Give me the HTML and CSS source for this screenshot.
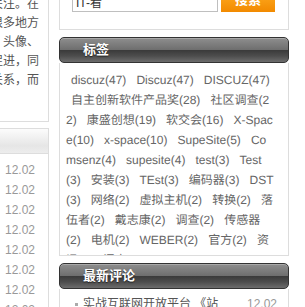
FILE: index.html
```html
<!DOCTYPE html>
<html lang="zh-CN">
<head>
    <meta charset="UTF-8">
    <meta name="viewport" content="width=device-width, initial-scale=1.0">
    <title>社区门户 - 标签</title>
    <link rel="stylesheet" href="styles.css">
</head>
<body>

<div class="wrap">

    <!-- main column (mostly scrolled out of view) -->
    <div class="main">
        <div class="box intro">
            <p>本站是一个以内容为核心的社区，我们更加重视会员之间的关注。在这个新平台上，您可以在很多地方看到其他会员的个人资料、头像、签名等信息，彼此交流并促进，同时也能够建立紧密的好友关系，而不只是浏览。</p>
        </div>

        <div class="box news">
            <div class="box-head">最新资讯</div>
            <ul class="news-list">
                <li><a href="#">康盛创想发布SupeSite 6.0正式版</a><span class="date">12.02</span></li>
                <li><a href="#">Discuz! 7.0 社区调查结果公布</a><span class="date">12.02</span></li>
                <li><a href="#">自主创新软件产品奖揭晓</a><span class="date">12.02</span></li>
                <li><a href="#">软交会现场直击</a><span class="date">12.02</span></li>
                <li><a href="#">X-Space 个人空间升级说明</a><span class="date">12.02</span></li>
                <li><a href="#">戴志康谈互联网开放平台</a><span class="date">12.02</span></li>
                <li><a href="#">虚拟主机安装教程</a><span class="date">12.02</span></li>
                <li><a href="#">编码器转换常见问题</a><span class="date">12.02</span></li>
            </ul>
        </div>
    </div>

    <!-- sidebar -->
    <div class="side">
        <div class="box search">
            <form class="search-form">
                <input type="text" class="search-input" value="IT-看">
                <button type="button" class="search-btn">搜索</button>
            </form>
        </div>

        <div class="side-head">标签</div>
        <div class="side-body tags">
            <a href="#">discuz(47)</a> <a href="#">Discuz(47)</a> <a href="#">DISCUZ(47)</a> <a href="#">自主创新软件产品奖(28)</a> <a href="#">社区调查(22)</a> <a href="#">康盛创想(19)</a> <a href="#">软交会(16)</a> <a href="#">X-Space(10)</a> <a href="#">x-space(10)</a> <a href="#">SupeSite(5)</a> <a href="#">Comsenz(4)</a> <a href="#">supesite(4)</a> <a href="#">test(3)</a> <a href="#">Test(3)</a> <a href="#">安装(3)</a> <a href="#">TEst(3)</a> <a href="#">编码器(3)</a> <a href="#">DST(3)</a> <a href="#">网络(2)</a> <a href="#">虚拟主机(2)</a> <a href="#">转换(2)</a> <a href="#">落伍者(2)</a> <a href="#">戴志康(2)</a> <a href="#">调查(2)</a> <a href="#">传感器(2)</a> <a href="#">电机(2)</a> <a href="#">WEBER(2)</a> <a href="#">官方(2)</a> <a href="#">资讯(2)</a> <a href="#">门户(2)</a>
        </div>

        <div class="side-head">最新评论</div>
        <div class="side-body comments">
            <ul>
                <li><a href="#">实战互联网开放平台 《站长》专访</a><span class="date">12.02</span></li>
            </ul>
        </div>
    </div>

</div>

</body>
</html>
```

FILE: styles.css
```css
html {
    overflow: hidden;
}
body {
    margin: 0;
    padding: 0;
    font-family: "Liberation Sans", "Noto Sans CJK SC", sans-serif;
    font-size: 12px;
    color: #555;
    background: #fff;
}
a {
    color: #666;
    text-decoration: none;
}
ul {
    list-style: none;
    margin: 0;
    padding: 0;
}
.wrap {
    display: flex;
    align-items: flex-start;
    gap: 10px;
    margin: -30px 0 0 -153px;
}
.main {
    width: 202px;
}
.side {
    width: 230px;
}
.box {
    border: 1px solid #ddd;
}

/* main column */
.intro {
    padding: 5px 9px 12px 11px;
}
.intro p {
    margin: 0;
    line-height: 19px;
}
.news {
    margin-top: 6px;
}
.box-head {
    height: 24px;
    line-height: 24px;
    padding-left: 12px;
    border-bottom: 1px solid #ddd;
    background: linear-gradient(#fcfcfc, #e6e6e6 70%, #ededed);
    font-weight: bold;
    color: #444;
}
.news-list {
    padding: 6px 13px 10px 12px;
}
.news-list li {
    display: flex;
    line-height: 20px;
}
.news-list a {
    flex: 1;
    overflow: hidden;
    white-space: nowrap;
}
.date {
    color: #999;
    margin-left: 12px;
}

/* sidebar */
.search {
    padding: 13px 0 17px 12px;
}
.search-form {
    display: flex;
    align-items: flex-end;
    gap: 3px;
    margin: 0;
}
.search-input {
    width: 146px;
    height: 22px;
    box-sizing: border-box;
    border: 1px solid #bfbfbf;
    padding: 0 3px;
    font-family: inherit;
    font-size: 12px;
    color: #333;
}
.search-btn {
    width: 54px;
    height: 28px;
    border: none;
    background: linear-gradient(#ffb63f, #f99c12 60%, #f28a00);
    color: #fff;
    font-family: inherit;
    font-size: 13px;
    font-weight: bold;
    cursor: pointer;
}
.side-head {
    height: 24px;
    line-height: 24px;
    margin-top: 7px;
    padding-left: 23px;
    border: 1px solid #333;
    border-radius: 5px;
    background: linear-gradient(#8e8e8e, #6f6f6f 48%, #3b3b3b 52%, #4d4d4d 75%, #6c6c6c);
    box-shadow: inset 0 1px 0 rgba(255, 255, 255, 0.25);
    color: #fff;
    font-size: 13px;
    font-weight: bold;
    text-shadow: 0 1px 1px #222;
}
.side-body {
    border: 1px solid #ddd;
    border-top: 0;
}
.tags {
    height: 193px;
    box-sizing: border-box;
    overflow: hidden;
    padding: 7px 14px 0 6px;
    line-height: 20px;
    word-break: break-all;
    word-spacing: 1.7px;
    text-rendering: geometricPrecision;
}
.tags a {
    margin-left: 5px;
    word-spacing: 0;
}
.comments {
    margin-top: 0;
    padding: 5px 11px 10px 15px;
}
.comments li {
    display: flex;
    align-items: flex-start;
    line-height: 20px;
}
.comments li::before {
    content: "";
    width: 3px;
    height: 3px;
    margin: 9px 5px 0 0;
    background: #aaa;
}
.comments a {
    flex: 1;
    color: #555;
}
```
